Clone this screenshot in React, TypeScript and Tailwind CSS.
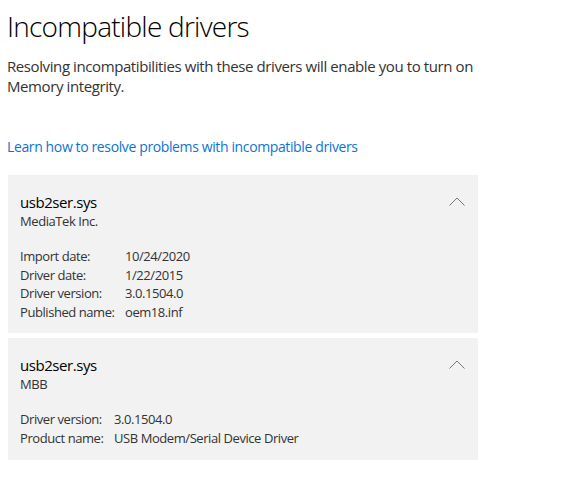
import React from "react";

const font = { fontFamily: '"Segoe UI", "Open Sans", "Noto Sans", sans-serif' };

function Chevron() {
  return (
    <svg width="16" height="9" viewBox="0 0 16 9" className="block">
      <path d="M0.5 8.5 L8 1 L15.5 8.5" fill="none" stroke="#777" strokeWidth="1" />
    </svg>
  );
}

function Card({ name, vendor, rows, labelW }: { name: string; vendor: string; rows: [string, string][]; labelW: string }) {
  return (
    <div className="relative w-[470px] bg-[#f2f2f2] pl-[12px] pt-[17px] pb-[12px] tracking-[-0.027em]">
      <div className="absolute right-[13px] top-[22px]">
        <Chevron />
      </div>
      <div className="text-[15px] leading-[20px] text-black">{name}</div>
      <div className="text-[13px] leading-[18px] text-[#333]">{vendor}</div>
      <div className="mt-[17px] flex flex-col">
        {rows.map(([k, v]) => (
          <div key={k} className="flex text-[13px] leading-[18.6px] text-[#333]">
            <div className={labelW}>{k}</div>
            <div>{v}</div>
          </div>
        ))}
      </div>
    </div>
  );
}

export default function App() {
  return (
    <div className="min-h-[490px] bg-white pl-[7px] pt-[8px]" style={font}>
      <h1 className="text-[28px] font-light leading-[36px] tracking-[-0.027em] text-black">Incompatible drivers</h1>
      <p className="mt-[12px] w-[480px] text-[15px] leading-[20px] tracking-[-0.027em] text-[#333]">
        Resolving incompatibilities with these drivers will enable you to turn on Memory integrity.
      </p>
      <a className="mt-[41px] block text-[14px] leading-[19px] tracking-[-0.027em] text-[#0a74d6]" href="#">
        Learn how to resolve problems with incompatible drivers
      </a>
      <div className="ml-[1px] mt-[19px] flex flex-col gap-[5px]">
        <Card
          name="usb2ser.sys"
          vendor="MediaTek Inc."
          labelW="w-[105px]"
          rows={[
            ["Import date:", "10/24/2020"],
            ["Driver date:", "1/22/2015"],
            ["Driver version:", "3.0.1504.0"],
            ["Published name:", "oem18.inf"],
          ]}
        />
        <Card
          name="usb2ser.sys"
          vendor="MBB"
          labelW="w-[94px]"
          rows={[
            ["Driver version:", "3.0.1504.0"],
            ["Product name:", "USB Modem/Serial Device Driver"],
          ]}
        />
      </div>
    </div>
  );
}
